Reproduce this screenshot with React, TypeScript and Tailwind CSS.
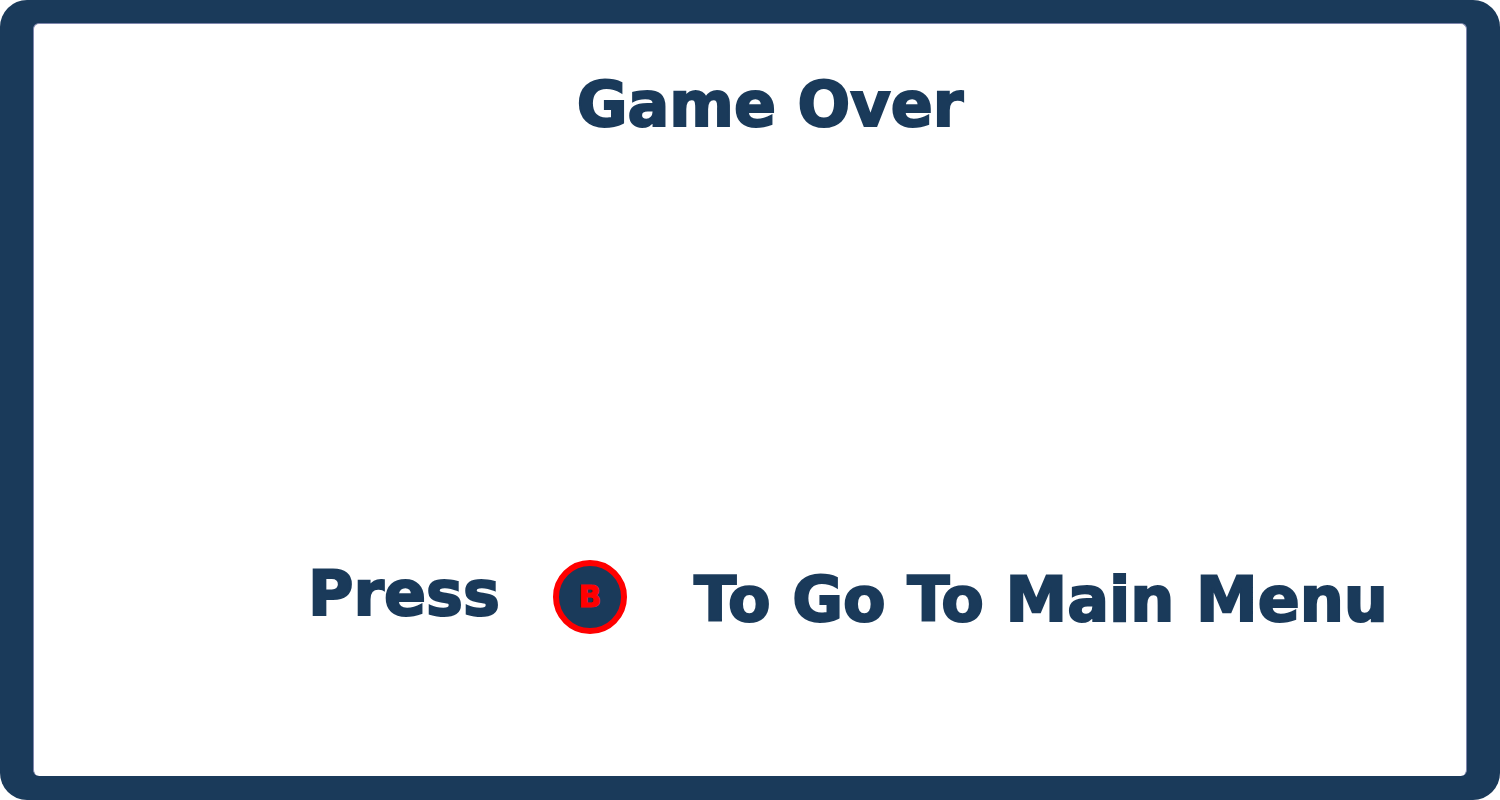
export default function App() {
  return (
    <div className="min-h-screen bg-white font-['DejaVu_Sans','Liberation_Sans',sans-serif] font-black text-[#1a3a5a]">
      <div className="flex min-h-screen rounded-[27px] bg-[#1a3a5a] px-[33px] pt-[23px] pb-6">
        <main className="flex grow flex-col justify-between rounded-md border border-b-0 border-[#7f86ad] bg-white pt-[49px] pb-[142px]">
          <h1 className="pl-10 text-center text-[62px] leading-16 [-webkit-text-stroke:2px_#1a3a5a]">Game Over</h1>
          <p className="flex items-center justify-end pr-[78px] text-[62px] leading-16 whitespace-nowrap [-webkit-text-stroke:2px_#1a3a5a]">
            <span className="pb-1.5">Press</span>
            <button
              type="button"
              className="mr-[67px] ml-[53px] flex size-[74px] shrink-0 items-center justify-center rounded-full border-6 border-[#ff0000] bg-[#1a3a5a] text-[30px] leading-8 text-[#ff0000] [-webkit-text-stroke:1px_#ff0000]"
            >
              B
            </button>
            <span className="pt-1.5">To Go To Main Menu</span>
          </p>
        </main>
      </div>
    </div>
  );
}
